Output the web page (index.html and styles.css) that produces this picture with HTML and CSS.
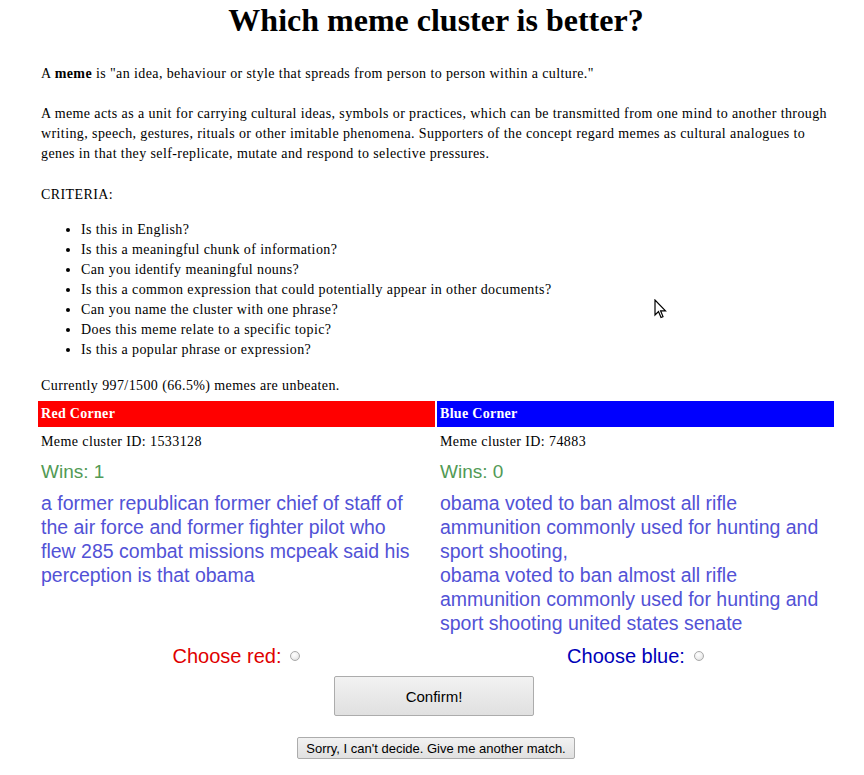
FILE: index.html
```html
<!DOCTYPE html>
<html>
<head>
<meta charset="utf-8">
<link rel="stylesheet" href="styles.css">
</head>
<body>
<div class="page">
  <h1 class="title">Which meme cluster is better?</h1>
  <p class="intro">A <b>meme</b> is "an idea, behaviour or style that spreads from person to person within a culture."</p>
  <p class="desc">A meme acts as a unit for carrying cultural ideas, symbols or practices, which can be transmitted from one mind to another through writing, speech, gestures, rituals or other imitable phenomena. Supporters of the concept regard memes as cultural analogues to genes in that they self-replicate, mutate and respond to selective pressures.</p>
  <p class="criteria">CRITERIA:</p>
  <ul class="crit-list">
    <li>Is this in English?</li>
    <li>Is this a meaningful chunk of information?</li>
    <li>Can you identify meaningful nouns?</li>
    <li>Is this a common expression that could potentially appear in other documents?</li>
    <li>Can you name the cluster with one phrase?</li>
    <li>Does this meme relate to a specific topic?</li>
    <li>Is this a popular phrase or expression?</li>
  </ul>
  <p class="status">Currently 997/1500 (66.5%) memes are unbeaten.</p>
  <div class="match">
    <div class="corner">
      <div class="head head-red">Red Corner</div>
      <div class="cid">Meme cluster ID: 1533128</div>
      <div class="wins">Wins: 1</div>
      <div class="phrases">a former republican former chief of staff of the air force and former fighter pilot who flew 285 combat missions mcpeak said his perception is that obama</div>
    </div>
    <div class="corner">
      <div class="head head-blue">Blue Corner</div>
      <div class="cid">Meme cluster ID: 74883</div>
      <div class="wins">Wins: 0</div>
      <div class="phrases">obama voted to ban almost all rifle ammunition commonly used for hunting and sport shooting,<br>obama voted to ban almost all rifle ammunition commonly used for hunting and sport shooting united states senate</div>
    </div>
    <label class="choose choose-red">Choose red: <span class="radio"></span></label>
    <label class="choose choose-blue">Choose blue: <span class="radio"></span></label>
  </div>
  <div class="actions">
    <button class="btn-confirm">Confirm!</button>
    <button class="btn-skip">Sorry, I can't decide. Give me another match.</button>
  </div>
</div>
<svg class="cursor" width="13" height="21" viewBox="0 0 13 21"><path d="M1 1 L1 16 L4.5 12.5 L7 18.5 L9 17.6 L6.6 11.8 L11.5 11.8 Z" fill="#fff" stroke="#000" stroke-width="1.2" stroke-linejoin="miter"/></svg>
</body>
</html>
```
FILE: styles.css
```css
html, body {
  margin: 0;
  padding: 0;
  background: #fff;
}
body {
  font-family: "Liberation Serif", "Times New Roman", serif;
  font-size: 14px;
  line-height: 20px;
  color: #000;
}
.page {
  width: 796px;
  margin-left: 38px;
}
.title {
  font-size: 32px;
  line-height: 40px;
  font-weight: bold;
  text-align: center;
  margin: 0;
}
.intro,
.desc,
.criteria,
.crit-list,
.status,
.cid {
  letter-spacing: 0.4px;
}
.intro {
  margin: 24px 0 0 3px;
}
.desc {
  margin: 20px 0 0 3px;
}
.criteria {
  margin: 21px 0 0 3px;
}
.crit-list {
  margin: 15px 0 0 0;
  padding-left: 43px;
}
.status {
  margin: 16px 0 0 3px;
}
.match {
  display: grid;
  grid-template-columns: 1fr 1fr;
  column-gap: 2px;
  margin-top: 5px;
}
.head {
  color: #fff;
  font-weight: bold;
  height: 26px;
  line-height: 26px;
  padding-left: 3px;
  letter-spacing: 0.3px;
}
.head-red { background: #ff0000; }
.head-blue { background: #0000ff; }
.cid {
  padding-left: 3px;
  margin-top: 5px;
}
.wins {
  font-family: "Liberation Sans", Arial, sans-serif;
  font-size: 19px;
  line-height: 22px;
  color: #529a55;
  padding-left: 3px;
  margin-top: 9px;
}
.phrases {
  font-family: "Liberation Sans", Arial, sans-serif;
  font-size: 19.5px;
  line-height: 24px;
  color: #5252d6;
  padding-left: 3px;
  padding-right: 13px;
  margin-top: 8px;
}
.choose {
  font-family: "Liberation Sans", Arial, sans-serif;
  font-size: 20px;
  line-height: 24px;
  margin-top: 9px;
  display: flex;
  justify-content: center;
  align-items: center;
  gap: 9px;
}
.choose-red { color: #e00000; }
.choose-blue { color: #0000b8; }
.radio {
  display: inline-block;
  width: 10px;
  height: 10px;
  border-radius: 50%;
  border: 1px solid #a9a9a9;
  background: radial-gradient(circle at 40% 35%, #ffffff 0%, #f0f0f0 50%, #d4d4d4 100%);
  box-sizing: border-box;
}
.actions {
  display: flex;
  flex-direction: column;
  align-items: center;
  margin-top: 8px;
}
.btn-confirm {
  width: 200px;
  height: 40px;
  font-family: "Liberation Sans", Arial, sans-serif;
  font-size: 15px;
  color: #000;
  background: linear-gradient(#f2f2f2, #e0e0e0);
  border: 1px solid #acacac;
  border-radius: 2px;
  margin-left: -4px;
}
.btn-skip {
  margin-top: 21px;
  height: 22px;
  padding: 0 8px;
  font-family: "Liberation Sans", Arial, sans-serif;
  font-size: 13px;
  color: #000;
  background: linear-gradient(#f2f2f2, #e0e0e0);
  border: 1px solid #acacac;
  border-radius: 2px;
}
.cursor {
  position: absolute;
  left: 654px;
  top: 299px;
}
```
